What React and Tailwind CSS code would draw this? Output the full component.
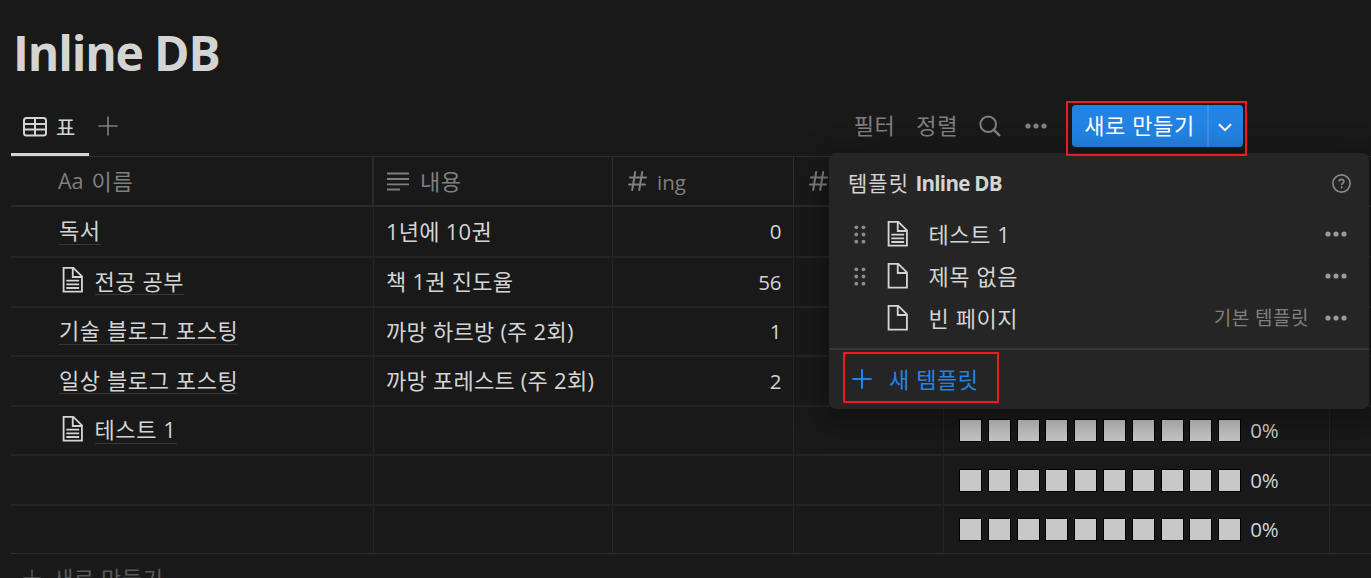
import React from 'react';

const PageIcon = ({ lines }) => (
    <svg className="h-[27.5px] w-[27.5px] shrink-0" viewBox="0 0 30 30" fill="currentColor">
        <path d="M16,1H4v28h22V11L16,1z M16,3.828L23.172,11H16V3.828z M24,27H6V3h8v10h10V27z" />
        {lines && <path d="M8,17h14v-2H8V17z M8,21h14v-2H8V21z M8,25h14v-2H8V25z" />}
    </svg>
);

const TableIcon = () => (
    <svg className="h-5 w-6 shrink-0" viewBox="0 0 24 20" fill="none" stroke="currentColor" strokeWidth="2">
        <rect x="1" y="1" width="22" height="17.5" rx="2.5" />
        <path d="M12 1v17M1 7h22M1 12.5h22" />
    </svg>
);

const PlusIcon = ({ className, strokeWidth = 1.6 }) => (
    <svg className={className} viewBox="0 0 20 20" fill="none" stroke="currentColor" strokeWidth={strokeWidth} strokeLinecap="round">
        <path d="M10 1v18M1 10h18" />
    </svg>
);

const SearchIcon = () => (
    <svg className="h-[22px] w-[22px]" viewBox="0 0 22 22" fill="none" stroke="currentColor" strokeWidth="2">
        <circle cx="9.2" cy="9.2" r="7.8" />
        <path d="M14.8 14.8l5.4 5.4" strokeWidth="2.6" strokeLinecap="round" />
    </svg>
);

const DotsIcon = () => (
    <svg className="h-[6px] w-[22px]" viewBox="0 0 22 6" fill="currentColor">
        <circle cx="3" cy="3" r="2.6" />
        <circle cx="11" cy="3" r="2.6" />
        <circle cx="19" cy="3" r="2.6" />
    </svg>
);

const DragIcon = () => (
    <svg className="h-[19px] w-3" viewBox="0 0 12 19" fill="currentColor">
        {[2.3, 9.5, 16.7].map((y) => (
            <React.Fragment key={y}>
                <circle cx="2.3" cy={y} r="1.9" />
                <circle cx="9.5" cy={y} r="1.9" />
            </React.Fragment>
        ))}
    </svg>
);

const HashIcon = () => (
    <svg className="h-5 w-[19px] shrink-0" viewBox="0 0 19 20" fill="none" stroke="currentColor" strokeWidth="2" strokeLinecap="round">
        <path d="M7.2 1L4.2 19M14.2 1L11.2 19M2 6.5h16M1 13.5h16" />
    </svg>
);

const TextIcon = () => (
    <svg className="h-[19px] w-[22px] shrink-0" viewBox="0 0 22 19" stroke="currentColor" strokeWidth="1.8">
        <path d="M0 1.5h22M0 7h22M0 12.3h22M0 17.5h13" />
    </svg>
);

const HelpIcon = () => (
    <svg className="h-[19px] w-[19px]" viewBox="0 0 19 19" fill="none" stroke="currentColor" strokeWidth="1.6">
        <circle cx="9.5" cy="9.5" r="8.6" />
        <path d="M7.2 7.6c0-3 4.7-2.9 4.7-.2 0 1.7-2.3 1.7-2.3 3.6" strokeWidth="1.7" />
        <circle cx="9.6" cy="13.3" r=".7" fill="currentColor" strokeWidth=".8" />
    </svg>
);

const rows = [
    { height: 'h-[51px] border-b-2', name: '독서', content: '1년에 10권', ing: '0' },
    { height: 'h-[50px] border-b-2', name: '전공 공부', icon: true, content: '책 1권 진도율', ing: '56' },
    { height: 'h-[49px] border-b-2', name: '기술 블로그 포스팅', content: '까망 하르방 (주 2회)', ing: '1' },
    { height: 'h-[50px] border-b-2', name: '일상 블로그 포스팅', content: '까망 포레스트 (주 2회)', ing: '2' },
    { height: 'h-[49px] border-b-2', name: '테스트 1', icon: true, progress: '0%' },
    { height: 'h-[50px] border-b-2', progress: '0%' },
    { height: 'h-[48px] border-b border-b-[#2f2f2f]', progress: '0%' },
];

const templates = [
    { name: '테스트 1', lines: true, draggable: true },
    { name: '제목 없음', draggable: true },
    { name: '빈 페이지', note: '기본 템플릿' },
];

const Progress = ({ label }) => (
    <div className="flex items-center text-[20.5px]">
        <div className="flex gap-[5.8px]">
            {Array.from({ length: 10 }, (_, i) => (
                <span key={i} className="h-[23px] w-[23px] border border-black bg-[#c8c8c8]" />
            ))}
        </div>
        <span className="ml-[9px] font-medium tracking-[-0.1px]">{label}</span>
    </div>
);

const Row = ({ row }) => (
    <div className={`flex border-[#252525] ${row.height}`}>
        <div className="flex w-[363px] items-center border-r border-[#252525] pl-12">
            {row.icon && (
                <span className="mr-[8px] -mt-1 flex">
                    <PageIcon lines />
                </span>
            )}
            {row.name && <span className="flex h-[26px] items-center border-b border-[#383838] pb-[2px]">{row.name}</span>}
        </div>
        <div className="flex w-[239px] items-center border-r border-[#252525] pb-[2px] pl-3 tracking-[0.25px]">{row.content}</div>
        <div className="flex w-[181px] items-center justify-end border-r border-[#252525] pr-3 text-[20.5px] font-medium tracking-[-0.4px]">{row.ing}</div>
        <div className="w-[150px] border-r border-[#252525]" />
        <div className="flex w-[386px] items-center border-r border-[#252525] pl-[15px]">
            {row.progress && <Progress label={row.progress} />}
        </div>
    </div>
);

const TemplateMenu = () => (
    <div className="absolute left-[829px] top-[153px] h-[256px] w-[540px] rounded-[7px] bg-[#252525] shadow-[0_8px_28px_8px_rgba(0,0,0,0.3)]">
        <div className="flex h-[60px] items-center justify-between pl-[19px] pr-[18px]">
            <span className="text-[21px] tracking-[1px]">
                템플릿 <span className="text-[20.5px] font-bold tracking-[-0.7px]">Inline DB</span>
            </span>
            <span className="text-[#8a8a8a]"><HelpIcon /></span>
        </div>
        {templates.map((t) => (
            <div key={t.name} className="flex h-[42px] items-center pr-[22px]">
                <span className="flex w-[55px] pl-[25px] text-[#8c8c8c]">{t.draggable && <DragIcon />}</span>
                <PageIcon lines={t.lines} />
                <span className="ml-[17px] flex-1">{t.name}</span>
                {t.note && <span className="mr-4 text-[19px] tracking-[0.5px] text-[#7f7f7f]">{t.note}</span>}
                <span className="text-[#9a9a9a]"><DotsIcon /></span>
            </div>
        ))}
        <div className="mt-[9px] flex h-[60px] items-center border-t-2 border-[#373737] pl-[23px] text-[#2383e2]">
            <PlusIcon className="h-5 w-5" strokeWidth={2} />
            <span className="ml-[17px]">새 템플릿</span>
        </div>
    </div>
);

const App = () => (
    <div className="relative h-[578px] w-[1371px] overflow-hidden bg-[#191919] font-['Open_Sans','Noto_Sans_CJK_KR',sans-serif] text-[22px] leading-none tracking-[0.6px] whitespace-nowrap text-[#d4d4d4]">
        <header className="flex h-[105px] items-center pl-[13px]">
            <h1 className="text-[48px] font-bold tracking-[-1.15px]">Inline DB</h1>
        </header>
        <nav className="ml-[11px] flex h-[52px] border-b border-[#2f2f2f]">
            <div className="flex h-[51px] w-[78px] items-center gap-[9px] border-b-[3px] border-[#d4d4d4] pl-3 pb-1">
                <TableIcon />
                <span className="text-[21px]">표</span>
            </div>
            <span className="ml-[9px] mt-[11px] text-[#7f7f7f]"><PlusIcon className="h-5 w-5" /></span>
            <div className="ml-auto mr-[128px] flex h-[42px] items-center text-[#7f7f7f]">
                <span className="pb-[2px]">필터</span>
                <span className="ml-[21px] pb-[2px]">정렬</span>
                <span className="ml-[21px]"><SearchIcon /></span>
                <span className="ml-[24px]"><DotsIcon /></span>
                <div className="ml-[25px] flex h-[42px] w-[171px] rounded bg-[#2383e2] text-white">
                    <span className="flex w-[137px] items-center justify-center border-r-2 border-[#3d91e6] pb-[2px]">새로 만들기</span>
                    <span className="flex flex-1 items-center justify-center pr-[2px]">
                        <svg className="mt-[2px] h-[9px] w-[14px]" viewBox="0 0 14 9" fill="none" stroke="currentColor" strokeWidth="2">
                            <path d="M1 1.2l6 6 6-6" />
                        </svg>
                    </span>
                </div>
            </div>
        </nav>
        <main className="ml-[11px]">
            <div className="flex h-[50px] border-b-2 border-[#2b2b2b] text-[#7f7f7f]">
                <div className="flex w-[363px] items-center gap-2 border-r-2 border-[#2b2b2b] pl-[47px]">
                    <span className="text-[21.5px] tracking-normal">Aa</span>이름
                </div>
                <div className="flex w-[239px] items-center gap-[11px] border-r border-[#2f2f2f] pl-[13px]"><TextIcon />내용</div>
                <div className="flex w-[181px] items-center gap-[10px] border-r border-[#2f2f2f] pl-[15px]">
                    <HashIcon />
                    <span className="mt-[2px] text-[20.5px] tracking-normal">ing</span>
                </div>
                <div className="flex w-[150px] items-center pl-[15px]"><HashIcon /></div>
            </div>
            {rows.map((row, i) => <Row key={i} row={row} />)}
            <div className="flex h-12 items-center pl-3 text-[#5a5a5a]">
                <PlusIcon className="h-[18px] w-[18px]" />
                <span className="ml-3 -mt-px">새로 만들기</span>
            </div>
        </main>
        <TemplateMenu />
        <div className="absolute left-[1066px] top-[101px] h-[55px] w-[181px] border-2 border-[#ed1c24]" />
        <div className="absolute left-[843px] top-[352px] h-[51px] w-[156px] border-2 border-[#ed1c24]" />
    </div>
);

export default App;
